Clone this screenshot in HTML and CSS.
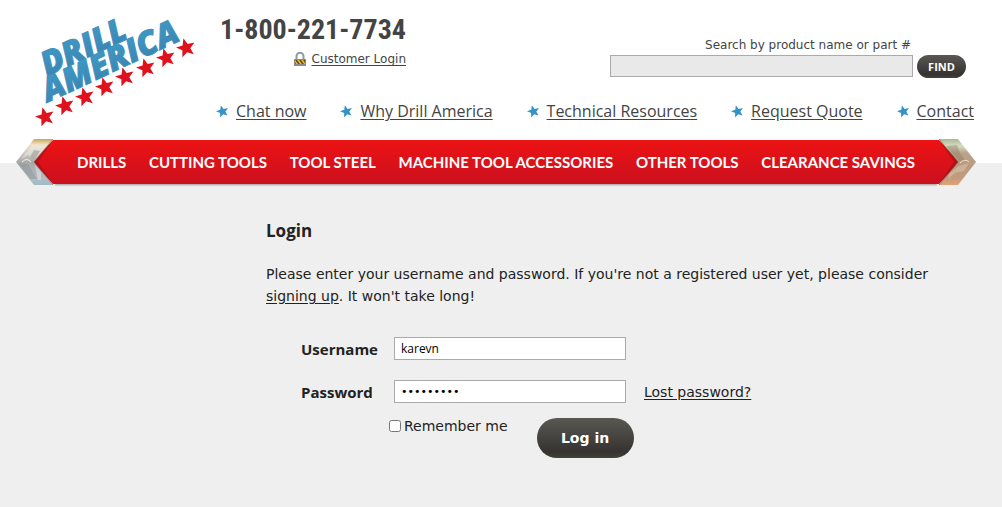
FILE: index.html
```html
<!DOCTYPE html>
<html lang="en">
<head>
<meta charset="utf-8">
<title>Drill America - Login</title>
<link rel="stylesheet" href="styles.css">
</head>
<body>
<svg class="defs" width="0" height="0" aria-hidden="true">
  <defs>
    <linearGradient id="red" x1="0" y1="0" x2="0" y2="1"><stop offset="0" stop-color="#ec1313"/><stop offset="1" stop-color="#cb101f"/></linearGradient>
    <linearGradient id="steel" x1="0" y1="0" x2="0" y2="1"><stop offset="0" stop-color="#c9a45c"/><stop offset=".12" stop-color="#efe3c4"/><stop offset=".25" stop-color="#d6d1c6"/><stop offset=".5" stop-color="#a9a9a6"/><stop offset=".85" stop-color="#b4bcc0"/><stop offset="1" stop-color="#9dbccb"/></linearGradient>
    <linearGradient id="bronze" x1="0" y1="0" x2="0" y2="1"><stop offset="0" stop-color="#a9b795"/><stop offset=".15" stop-color="#d8dcc2"/><stop offset=".3" stop-color="#b9a58c"/><stop offset=".55" stop-color="#b89a80"/><stop offset=".85" stop-color="#c49a7c"/><stop offset="1" stop-color="#e2a274"/></linearGradient>
    <linearGradient id="blue" x1="0" y1="0" x2="0" y2="1"><stop offset="0" stop-color="#3fa0cb"/><stop offset="1" stop-color="#3c7fab"/></linearGradient>
    <symbol id="star" viewBox="-10 -10 20 20"><path d="M0-10 2.6-3.4 9.5-3.1 4.1 1.3 5.9 8.1 0 4.3-5.9 8.1-4.1 1.3-9.5-3.1-2.6-3.4Z"/></symbol>
  </defs>
</svg>
<header class="header">
  <a class="logo" href="#" aria-label="Drill America home">
    <svg class="logo-art" viewBox="0 0 180 120">
      <g class="logo-words" transform="rotate(-25)">
        <text x="-9" y="69">DRILL</text>
        <text x="-19" y="93">AMERICA</text>
      </g>
      <g fill="#e0101c">
        <use href="#star" width="20" height="20" transform="translate(19 107) rotate(-15) translate(-10 -10)"/>
        <use href="#star" width="20" height="20" transform="translate(39 96) rotate(-15) translate(-10 -10)"/>
        <use href="#star" width="20" height="20" transform="translate(59 87) rotate(-15) translate(-10 -10)"/>
        <use href="#star" width="20" height="20" transform="translate(79 77) rotate(-15) translate(-10 -10)"/>
        <use href="#star" width="20" height="20" transform="translate(99 67) rotate(-15) translate(-10 -10)"/>
        <use href="#star" width="20" height="20" transform="translate(120 58) rotate(-15) translate(-10 -10)"/>
        <use href="#star" width="20" height="20" transform="translate(140 48) rotate(-15) translate(-10 -10)"/>
        <use href="#star" width="20" height="20" transform="translate(160 38) rotate(-15) translate(-10 -10)"/>
      </g>
    </svg>
  </a>
  <div class="header-main">
    <div class="header-top">
      <div class="contact">
        <div class="phone">1-800-221-7734</div>
        <a class="customer" href="#">
          <svg width="12" height="14" viewBox="0 0 12 14" aria-hidden="true"><path d="M2.5 8V4a3.5 3.3 0 0 1 7 0v4" fill="none" stroke="#8f9a9c" stroke-width="2"/><path d="M0 7h12v7H0z" fill="#8c8c84"/><path d="M1 8h10v4H1z" fill="#f5bd2c"/><path d="m1 8 3 4h2L3 8Zm4 0 3 4h2L7 8Zm4 0 2 3V8ZM1 10v2h1Z" fill="#5b4a25"/></svg>
          <span>Customer Login</span>
        </a>
      </div>
      <form class="search">
        <label for="q">Search by product name or part #</label>
        <div class="search-row"><input id="q" type="text"><button type="button">FIND</button></div>
      </form>
    </div>
    <nav class="links" aria-label="Quick links">
      <a href="#"><svg class="bullet"><use href="#star"/></svg><span>Chat now</span></a>
      <a href="#"><svg class="bullet"><use href="#star"/></svg><span>Why Drill America</span></a>
      <a href="#"><svg class="bullet"><use href="#star"/></svg><span>Technical Resources</span></a>
      <a href="#"><svg class="bullet"><use href="#star"/></svg><span>Request Quote</span></a>
      <a href="#"><svg class="bullet"><use href="#star"/></svg><span>Contact</span></a>
    </nav>
  </div>
</header>
<div class="nav-band">
  <svg class="cap" viewBox="0 0 37 46" aria-hidden="true"><path d="M37 1 17 23 37 45Z" fill="url(#red)"/><path d="M37 1 17 23 37 45 22 23Z" fill="#8e0c12" opacity=".45"/><path d="M37 0H18L0 23 18 46H37L18 23Z" fill="url(#steel)"/><path d="m16 6 14 1-12 15-6-6-7 4Z" fill="#f4f2ec" opacity=".45"/><path d="m24 12-6 10-4-4 4-7Z" fill="#8b8580" opacity=".45"/><path d="m2 24 10 1 9 15h-7Z" fill="#8b9499" opacity=".5"/><path d="m19 26 6 7v8h-3Z" fill="#e8ecee" opacity=".5"/><path d="M6 23q5-5 9 0" fill="none" stroke="#f5f5f5"/><path d="M37 0 18 23 37 46" fill="none" stroke="#6d514b" opacity=".5"/></svg>
  <nav class="nav" aria-label="Products">
    <a href="#">DRILLS</a><a href="#">CUTTING TOOLS</a><a href="#">TOOL STEEL</a><a href="#">MACHINE TOOL ACCESSORIES</a><a href="#">OTHER TOOLS</a><a href="#">CLEARANCE SAVINGS</a>
  </nav>
  <svg class="cap" viewBox="0 0 37 46" aria-hidden="true"><path d="M0 1 20 23 0 45Z" fill="url(#red)"/><path d="M0 1 20 23 0 45 15 23Z" fill="#8e0c12" opacity=".45"/><path d="M0 0H19L37 23 19 46H0L19 23Z" fill="url(#bronze)"/><path d="m7 7 11-1 3 8 5 7-6 1Z" fill="#8f7762" opacity=".4"/><path d="m20 27 10-3-5 8-9 2-7 6 1-5Z" fill="#d9c2ab" opacity=".6"/><path d="M21 24q5-5 9-1" fill="none" stroke="#f0dfca"/><path d="M0 0 19 23 0 46" fill="none" stroke="#5d473b" opacity=".6"/></svg>
</div>
<main class="content">
  <h1>Login</h1>
  <p>Please enter your username and password. If you're not a registered user yet, please consider <a href="#">signing up</a>. It won't take long!</p>
  <form class="login">
    <label class="name" for="user">Username</label>
    <input class="field" id="user" type="text" value="karevn">
    <label class="name" for="pass">Password</label>
    <input class="field secret" id="pass" type="password" value="password1">
    <a class="lost" href="#">Lost password?</a>
    <div class="actions">
      <label class="remember"><input type="checkbox">Remember me</label>
      <button type="button">Log in</button>
    </div>
  </form>
</main>
</body>
</html>
```
FILE: styles.css
```css
* { box-sizing: border-box; }
body {
  margin: 0;
  background: #efefef;
  color: #222;
  font: 14px/22px "DejaVu Sans", Verdana, sans-serif;
}
a { color: inherit; text-underline-offset: 2px; }
.defs { display: block; position: absolute; }
.header {
  display: flex;
  padding: 10px 28px 0 26px;
  background: #fff;
  color: #444;
}
.logo { width: 190px; flex: none; }
.logo-art { display: block; width: 180px; height: 120px; overflow: visible; }
.logo-words {
  font: italic 800 33px "Open Sans", sans-serif;
  fill: url(#blue);
  stroke: #3c8fbd;
  stroke-width: 1px;
}
.header-main { flex: 1; }
.header-top { display: flex; justify-content: space-between; padding: 0 8px 0 4px; }
.phone { font: bold 28px/40px "Roboto Condensed", "DejaVu Sans Condensed", sans-serif; }
.contact { width: 186px; white-space: nowrap; }
.customer {
  display: flex;
  justify-content: flex-end;
  align-items: center;
  gap: 6px;
  font-size: 12px;
  line-height: 18px;
  text-decoration: none;
}
.customer span { text-decoration: underline; }
.search { padding-top: 25px; }
.search label {
  display: block;
  padding-right: 55px;
  font-size: 12px;
  line-height: 20px;
  text-align: right;
}
.search-row { display: flex; gap: 4px; }
.search input {
  width: 303px;
  height: 22px;
  border: 1px solid #aaa;
  background: #e9e9e9;
}
button {
  border: 0;
  border-radius: 20px;
  padding: 0;
  background: linear-gradient(#5a5853, #353330 85%, #44423a);
  color: #fff;
}
.search button { width: 49px; height: 23px; font: bold 11px "Open Sans", sans-serif; }
.links {
  display: flex;
  justify-content: space-between;
  padding: 21px 0 16px;
  font: 16px/24px "Open Sans", sans-serif;
}
.links a { display: flex; align-items: center; gap: 7px; text-decoration: none; }
.links span { text-decoration: underline; }
.bullet { width: 13px; height: 13px; fill: #3392c8; transform: rotate(-15deg); }
.nav-band {
  display: flex;
  align-items: center;
  padding: 0 26px 0 16px;
  background: linear-gradient(#fff 24px, #efefef 24px);
}
.cap { width: 37px; height: 46px; flex: none; }
.nav {
  flex: 1;
  display: flex;
  justify-content: space-between;
  padding: 0 24px;
  background: linear-gradient(#ec1313, #cb101f);
  box-shadow: 0 3px 2px -2px #999;
  color: #fff;
  font: bold 15px/44px "Lato", sans-serif;
}
.nav a { text-decoration: none; white-space: nowrap; }
.content { padding: 34px 40px 40px 266px; }
h1 { margin: 0 0 20px; font: bold 17px/24px "Open Sans", sans-serif; }
p { margin: 0 0 30px; }
.login {
  display: grid;
  grid-template-columns: 75px 232px auto;
  gap: 20px 18px;
  align-items: center;
  padding-left: 35px;
}
.name { grid-column: 1; font: bold 15px/20px "Open Sans", sans-serif; }
.field {
  height: 23px;
  border: 1px solid #aaa;
  padding: 0 6px;
  background: #fff;
  color: #000;
  font: 12px "Open Sans", sans-serif;
}
.secret { font: 11px "DejaVu Sans", sans-serif; }
.actions {
  grid-column: 2 / 4;
  display: flex;
  align-items: flex-start;
  gap: 29px;
  margin: -5px 0 0 -5px;
}
.remember { display: flex; align-items: center; gap: 3px; line-height: 16px; }
.remember input { width: 12px; height: 12px; margin: 0; }
.actions button { width: 97px; height: 40px; font: bold 14px "DejaVu Sans", sans-serif; }
```
